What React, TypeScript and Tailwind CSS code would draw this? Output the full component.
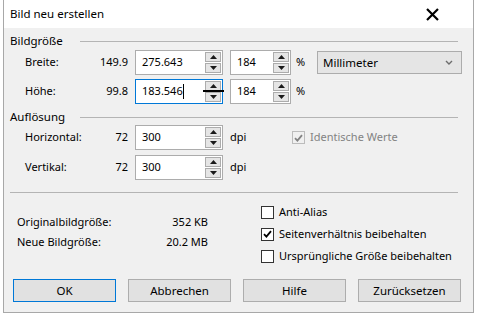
import React from 'react'

const font = { fontFamily: '"Noto Sans", "Open Sans", Arial, sans-serif' }

// small up / down triangle used on spinner buttons
const Tri = ({ down = false }: { down?: boolean }) => (
  <svg width="7" height="4" viewBox="0 0 7 4" className="block">
    {down ? <path d="M0 0 H7 L3.5 4 Z" fill="#1a1a1a" /> : <path d="M0 4 H7 L3.5 0 Z" fill="#1a1a1a" />}
  </svg>
)

const Spin = () => (
  <div className="flex flex-col gap-[1px] w-[17px] h-full py-[1px] pr-[1px]">
    <div className="flex-1 flex items-center justify-center bg-[#e5e5e5] border border-[#acacac]">
      <Tri />
    </div>
    <div className="flex-1 flex items-center justify-center bg-[#e5e5e5] border border-[#acacac]">
      <Tri down />
    </div>
  </div>
)

const NumField = ({ value, width, focused = false, caret = false }: { value: string; width: string; focused?: boolean; caret?: boolean }) => (
  <div className={`relative flex h-[25px] bg-white border ${focused ? 'border-[#0078d7]' : 'border-[#acacac]'} ${width}`}>
    <div className="flex-1 flex items-center pl-[6px] text-[11px] text-black">
      {value}
      {caret && <span className="inline-block w-[1px] h-[15px] bg-black" />}
    </div>
    <Spin />
    {focused && <div className="absolute left-[67px] top-[10px] w-[21px] h-[2px] bg-black" />}
  </div>
)

const CheckBox = ({ checked = false, disabled = false }: { checked?: boolean; disabled?: boolean }) => (
  <div className={`w-[13px] h-[13px] border flex items-center justify-center ${disabled ? 'border-[#bcbcbc] bg-[#f0f0f0]' : 'border-[#333] bg-white'}`}>
    {checked && (
      <svg width="9" height="8" viewBox="0 0 9 8">
        <path d="M1 4.2 L3.4 6.6 L8 1.2" fill="none" stroke={disabled ? '#838383' : '#000'} strokeWidth="1.8" />
      </svg>
    )}
  </div>
)

const SectionHead = ({ title }: { title: string }) => (
  <div className="flex items-center h-[16px] pl-[6px] pr-[15px]">
    <span className="w-[70px] text-[11.5px] text-black">{title}</span>
    <div className="flex-1 h-[1px] bg-[#b4b4b4]" />
  </div>
)

export default function App() {
  return (
    <div className="w-[479px] h-[316px] bg-white" style={font}>
      <div className="ml-[3px] w-[471px] h-[313px] flex flex-col border-l border-r border-b border-[#a8a8a8]">
        {/* title bar */}
        <div className="h-[28px] bg-white flex items-center justify-between pl-[6px] pr-[34px]">
          <span className="text-[11.5px] text-black">Bild neu erstellen</span>
          <svg width="13" height="13" viewBox="0 0 13 13">
            <path d="M1 1 L12 12 M12 1 L1 12" stroke="#000" strokeWidth="2.2" />
          </svg>
        </div>

        <div className="flex-1 bg-[#f0f0f0] flex flex-col pt-[5px]">
          <SectionHead title="Bildgröße" />
          <div className="flex flex-col gap-[4px] mt-[1px] pl-[21px] text-[11px] text-black">
            <div className="flex items-center">
              <span className="w-[70px]">Breite:</span>
              <span className="w-[33px] text-right">149.9</span>
              <div className="ml-[7px]"><NumField value="275.643" width="w-[88px]" /></div>
              <div className="ml-[7px]"><NumField value="184" width="w-[61px]" /></div>
              <span className="ml-[5px] w-[21px]">%</span>
              <div className="w-[145px] h-[23px] bg-[#e5e5e5] border border-[#acacac] flex items-center justify-between pl-[5px] pr-[8px]">
                <span className="text-[11.5px]">Millimeter</span>
                <svg width="8" height="5" viewBox="0 0 8 5">
                  <path d="M1 1 L4 4 L7 1" fill="none" stroke="#6d6d6d" strokeWidth="1.4" />
                </svg>
              </div>
            </div>
            <div className="flex items-center">
              <span className="w-[70px]">Höhe:</span>
              <span className="w-[33px] text-right">99.8</span>
              <div className="ml-[7px]"><NumField value="183.546" width="w-[88px]" focused caret /></div>
              <div className="ml-[7px]"><NumField value="184" width="w-[61px]" /></div>
              <span className="ml-[5px]">%</span>
            </div>
          </div>

          <div className="mt-[5px]">
            <SectionHead title="Auflösung" />
          </div>
          <div className="flex flex-col gap-[5px] pl-[21px] text-[11px] text-black">
            <div className="flex items-center">
              <span className="w-[70px]">Horizontal:</span>
              <span className="w-[33px] text-right">72</span>
              <div className="ml-[7px]"><NumField value="300" width="w-[88px]" /></div>
              <span className="ml-[7px] w-[62px]">dpi</span>
              <CheckBox checked disabled />
              <span className="ml-[5px] text-[#838383]">Identische Werte</span>
            </div>
            <div className="flex items-center">
              <span className="w-[70px]">Vertikal:</span>
              <span className="w-[33px] text-right">72</span>
              <div className="ml-[7px]"><NumField value="300" width="w-[88px]" /></div>
              <span className="ml-[7px]">dpi</span>
            </div>
          </div>

          <div className="mt-[12px] ml-[6px] mr-[15px] h-[1px] bg-[#b4b4b4]" />

          <div className="flex mt-[8px] text-[11px] text-black">
            <div className="flex flex-col pt-[11px] pl-[13px] w-[257px]">
              <div className="flex items-center h-[20px]">
                <span className="w-[140px]">Originalbildgröße:</span>
                <span className="w-[51px] text-right">352 KB</span>
              </div>
              <div className="flex items-center h-[20px]">
                <span className="w-[140px]">Neue Bildgröße:</span>
                <span className="w-[51px] text-right">20.2 MB</span>
              </div>
            </div>
            <div className="flex flex-col">
              <div className="flex items-center gap-[5px] h-[22px]">
                <CheckBox />
                <span>Anti-Alias</span>
              </div>
              <div className="flex items-center gap-[5px] h-[22px]">
                <CheckBox checked />
                <span>Seitenverhältnis beibehalten</span>
              </div>
              <div className="flex items-center gap-[5px] h-[22px]">
                <CheckBox />
                <span>Ursprüngliche Größe beibehalten</span>
              </div>
            </div>
          </div>

          <div className="flex gap-[12px] mt-[12px] pl-[9px] text-[11.5px] text-black">
            <button className="w-[103px] h-[23px] bg-[#e1e1e1] border border-[#0078d7]">OK</button>
            <button className="w-[103px] h-[23px] bg-[#e1e1e1] border border-[#adadad]">Abbrechen</button>
            <button className="w-[103px] h-[23px] bg-[#e1e1e1] border border-[#adadad]">Hilfe</button>
            <button className="w-[103px] h-[23px] bg-[#e1e1e1] border border-[#adadad]">Zurücksetzen</button>
          </div>
        </div>
      </div>
    </div>
  )
}
